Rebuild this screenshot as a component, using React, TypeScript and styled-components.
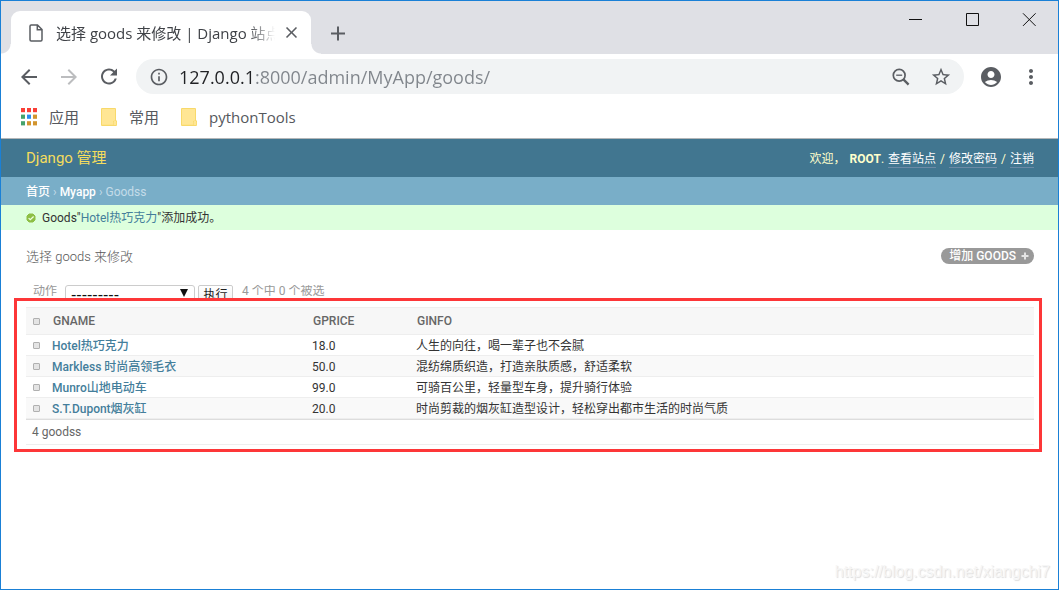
import React from "react";
import styled, { createGlobalStyle } from "styled-components";
import {
  MdAccountCircle,
  MdAdd,
  MdArrowBack,
  MdArrowForward,
  MdClose,
  MdInfoOutline,
  MdMoreVert,
  MdRefresh,
  MdStarBorder,
} from "react-icons/md";

const uiFont = `"Open Sans", "Noto Sans CJK SC", sans-serif`;
const adminFont = `Roboto, "Noto Sans CJK SC", sans-serif`;

const GlobalStyle = createGlobalStyle`
  *, *::before, *::after { box-sizing: border-box; }
  body { margin: 0; background: #fff; }
  a { color: inherit; text-decoration: none; }
  button { font: inherit; color: inherit; border: 0; background: none; padding: 0; }
`;

const Window = styled.div`
  position: relative;
  min-height: 100vh;
  border: 1px solid #1a80d6;
  background: #fff;
  font-family: ${uiFont};
`;

/* ---------- browser chrome ---------- */

const TitleBar = styled.div`
  display: flex;
  align-items: flex-start;
  height: 53px;
  padding-left: 10px;
  background: #dfe0e5;
`;

const Tab = styled.div`
  position: relative;
  display: flex;
  align-items: center;
  width: 300px;
  height: 43px;
  margin-top: 10px;
  padding: 0 10px 0 18px;
  border-radius: 9px 9px 0 0;
  background: #fff;

  &::before,
  &::after {
    content: "";
    position: absolute;
    bottom: 0;
    width: 10px;
    height: 10px;
  }
  &::before {
    left: -10px;
    background: radial-gradient(circle at 0 0, transparent 9px, #fff 10px);
  }
  &::after {
    right: -10px;
    background: radial-gradient(circle at 100% 0, transparent 9px, #fff 10px);
  }
`;

const TabTitle = styled.span`
  flex: 1;
  margin: 0 6px 0 13px;
  overflow: hidden;
  white-space: nowrap;
  font-size: 15px;
  line-height: 24px;
  color: #3f4247;
  mask-image: linear-gradient(to right, #000 88%, transparent 100%);
`;

const IconButton = styled.button<{ $size?: number; $color?: string }>`
  display: flex;
  flex: none;
  align-items: center;
  justify-content: center;
  width: ${(p) => p.$size ?? 24}px;
  height: ${(p) => p.$size ?? 24}px;
  color: ${(p) => p.$color ?? "#5a5d62"};
`;

const NewTab = styled(IconButton)`
  margin: 20px 0 0 15px;
`;

const WindowControls = styled.div`
  display: flex;
  gap: 33px;
  margin: 7px 17px 0 auto;
`;

const Toolbar = styled.div`
  display: flex;
  align-items: center;
  height: 45px;
  padding: 0 15px 0 16px;
  gap: 16px;
`;

const AddressBar = styled.div`
  display: flex;
  flex: 1;
  align-items: center;
  height: 35px;
  margin: 0 -1px 0 -1px;
  padding: 0 11px 0 13px;
  border-radius: 18px;
  background: #f1f3f4;
  color: #5a5d62;
`;

const UrlInput = styled.input`
  flex: 1;
  min-width: 0;
  margin: 0 10px;
  padding: 0;
  border: 0;
  outline: 0;
  font-family: ${uiFont};
  font-size: 18px;
  line-height: 26px;
  background: linear-gradient(to right, #202124 76px, #80858b 76px);
  background-clip: text;
  -webkit-text-fill-color: transparent;
`;

const AddressActions = styled.div`
  display: flex;
  gap: 16px;
`;

const Bookmarks = styled.nav`
  display: flex;
  align-items: center;
  height: 40px;
  padding: 0 19px 3px;
  gap: 22px;
  border-bottom: 1px solid #b3b6b8;
  font-size: 15px;
  line-height: 22px;
  color: #55585d;
`;

const Bookmark = styled.a`
  display: flex;
  align-items: center;
  gap: 12px;
`;

/* ---------- Django admin ---------- */

const Admin = styled.div`
  font-family: ${adminFont};
  font-size: 12px;
  line-height: 16px;
  color: #333;
`;

const AdminHeader = styled.header`
  display: flex;
  align-items: center;
  justify-content: space-between;
  height: 38px;
  padding: 0 24px 0 25px;
  background: #417690;
  color: #ffc;
`;

const Branding = styled.a`
  font-size: 15px;
  line-height: 20px;
  color: #f5dd5d;
`;

const UserTools = styled.div`
  display: flex;
  align-items: baseline;
  gap: 4px;
  padding-top: 2px;
`;

const UserLink = styled.a`
  color: #fff;
  border-bottom: 1px solid #6b8aa6;
  line-height: 15px;
`;

const Breadcrumbs = styled.nav`
  display: flex;
  align-items: center;
  gap: 3px;
  height: 28px;
  padding: 1px 25px 0;
  background: #79aec8;
  color: #c4dce8;

  a {
    color: #fff;
    font-weight: 500;
  }
`;

const Message = styled.p`
  display: flex;
  align-items: center;
  gap: 6px;
  height: 25px;
  margin: 0;
  padding: 0 25px;
  background: #dfd;

  a {
    color: #447e9b;
  }
`;

const Main = styled.main`
  padding: 18px 16px 24px 13px;
`;

const TitleRow = styled.div`
  display: flex;
  align-items: center;
  justify-content: space-between;
  height: 16px;
  margin: 0 8px 21px 12px;
`;

const PageTitle = styled.h1`
  margin: 0;
  padding-top: 2px;
  font-size: 13px;
  font-weight: 300;
  color: #555;
`;

const AddLink = styled.a`
  display: flex;
  align-items: center;
  gap: 5px;
  height: 16px;
  padding: 0 5px 0 8px;
  border-radius: 8px;
  background: #999;
  color: #fff;
  font-weight: 500;
`;

const Actions = styled.form`
  display: flex;
  align-items: flex-start;
  height: 13px;
  padding-left: 19px;
  overflow: hidden;
  line-height: 13px;
  color: #999;
`;

const ActionLabel = styled.label`
  display: flex;
  gap: 8px;
`;

const SelectBox = styled.span`
  position: relative;
  display: block;
  width: 130px;

  svg {
    position: absolute;
    top: 4px;
    right: 7px;
  }
`;

const Select = styled.select`
  display: block;
  width: 100%;
  height: 20px;
  padding: 0 5px;
  appearance: none;
  border: 1px solid #ccc;
  border-radius: 3px;
  background: #fff;
  color: #111;
  font: 16px/18px "Liberation Sans", sans-serif;
`;

const RunButton = styled.button`
  width: 35px;
  height: 20px;
  margin: 0 9px 0 3px;
  border: 1px solid #ccc;
  border-radius: 2px;
  background: linear-gradient(#fff, #eee);
  color: #222;
`;

const Results = styled.section`
  padding: 6px 5px 4px 9px;
  border: 3px solid #fd3638;
  background: #fff;
`;

const Table = styled.table`
  width: 100%;
  table-layout: fixed;
  border-collapse: collapse;
  text-align: left;
`;

const HeadCell = styled.th<{ $width?: number }>`
  width: ${(p) => (p.$width ? `${p.$width}px` : "auto")};
  height: 27px;
  padding: 0 0 0 9px;
  border-top: 1px solid #eee;
  border-bottom: 1px solid #eee;
  background: #f7f7f7;
  color: #666;
  font-weight: 500;
`;

const Row = styled.tr`
  height: 21px;
  border-bottom: 1px solid #eee;

  &:nth-child(even) {
    background: #f9f9f9;
  }
`;

const Cell = styled.td`
  padding: 1px 0 0 8px;
`;

const NameCell = styled.th`
  padding: 1px 0 0 8px;
  color: #447e9b;
  font-weight: 500;
`;

const Check = styled.input`
  display: block;
  width: 7px;
  height: 7px;
  margin: 0;
  appearance: none;
  border: 1px solid #b0b0b0;
  border-radius: 1px;
  background: #e4e4e4;
`;

const HeadCheckCell = styled(HeadCell)`
  padding-left: 7px;
`;

const CheckCell = styled(Cell)`
  padding: 0 0 0 7px;
`;

const Count = styled.p`
  height: 26px;
  margin: 0;
  padding: 0 6px;
  border-top: 1px solid #ddd;
  border-bottom: 1px solid #eee;
  line-height: 24px;
  color: #666;
`;

const Watermark = styled.span`
  position: absolute;
  right: 8px;
  bottom: 7px;
  font: 16px/20px "Liberation Sans", sans-serif;
  color: #f6f6f6;
  text-shadow: 1px 1px 1px #ddd;
`;

const PageIcon = () => (
  <svg width="14" height="18" viewBox="0 0 14 18" fill="none" stroke="#5a5d62" strokeWidth="1.5">
    <path d="M1 2.2Q1 1 2.2 1H8.5L13 5.6V15.8Q13 17 11.8 17H2.2Q1 17 1 15.8ZM8.3 1.2V5.8H12.8" />
  </svg>
);

const ZoomOutIcon = () => (
  <svg width="18" height="18" viewBox="0 0 18 18" fill="none" stroke="currentColor">
    <circle cx="7.2" cy="7.2" r="5.9" strokeWidth="1.7" />
    <path d="M11.4 11.4L16.6 16.6" strokeWidth="2.3" />
    <path d="M4.2 7.2H10.2" strokeWidth="1.3" />
  </svg>
);

const gridColors = [
  "#f93e36", "#f93e36", "#f93e36",
  "#45a36c", "#2a8cf0", "#d2952f",
  "#45a36c", "#d2952f", "#d2952f",
];

const AppsIcon = () => (
  <svg width="17" height="18" viewBox="0 0 17 18">
    {gridColors.map((c, i) => (
      <rect key={i} x={1 + (i % 3) * 6} y={Math.floor(i / 3) * 6.6} width="4" height="4.2" fill={c} />
    ))}
  </svg>
);

const FolderIcon = () => (
  <svg width="16" height="18" viewBox="0 0 16 18">
    <path d="M0 1Q0 0 1 0H14Q15 0 15 1V12L16 13V17Q16 18 15 18H1Q0 18 0 17Z" fill="#f8d96a" />
    <path d="M1 1H14V12.4L12 13V16.8H1Z" fill="#ffe694" />
    <path d="M12.6 17V14.2Q12.6 12.8 14 12.8T15.2 14.2V17Z" fill="#ffe694" />
  </svg>
);

const SuccessIcon = () => (
  <svg width="10" height="10" viewBox="0 0 10 10">
    <path d="M3 1H7L9 3V7L7 9H3L1 7V3Z" fill="#8dbf45" stroke="#8dbf45" strokeLinejoin="round" />
    <path d="M2.6 5.1L4.3 6.7L7.6 3.5" fill="none" stroke="#efffe0" strokeWidth="1.3" />
  </svg>
);

const PlusIcon = () => (
  <svg width="8" height="8" viewBox="0 0 8 8" stroke="#e4e4e4" strokeWidth="2">
    <path d="M4 .5V7.5M.5 4H7.5" />
  </svg>
);

const ControlIcon = ({ d }: { d: string }) => (
  <svg width="14" height="14" viewBox="0 0 14 14" fill="none" stroke="#111" strokeWidth="1">
    <path d={d} />
  </svg>
);

const goods = [
  { name: "Hotel热巧克力", price: "18.0", info: "人生的向往，喝一辈子也不会腻" },
  { name: "Markless 时尚高领毛衣", price: "50.0", info: "混纺绵质织造，打造亲肤质感，舒适柔软" },
  { name: "Munro山地电动车", price: "99.0", info: "可骑百公里，轻量型车身，提升骑行体验" },
  { name: "S.T.Dupont烟灰缸", price: "20.0", info: "时尚剪裁的烟灰缸造型设计，轻松穿出都市生活的时尚气质" },
];

export default function App() {
  return (
    <Window lang="zh-CN">
      <GlobalStyle />
      <TitleBar>
        <Tab>
          <PageIcon />
          <TabTitle>选择 goods 来修改 | Django 站点</TabTitle>
          <IconButton $size={20} aria-label="关闭标签页">
            <MdClose size={19} />
          </IconButton>
        </Tab>
        <NewTab aria-label="新标签页">
          <MdAdd size={25} />
        </NewTab>
        <WindowControls>
          <IconButton aria-label="最小化"><ControlIcon d="M1 6.5H14" /></IconButton>
          <IconButton aria-label="最大化"><ControlIcon d="M1.5 .5H13.5V12.5H1.5Z" /></IconButton>
          <IconButton aria-label="关闭"><ControlIcon d="M1 .3L13.6 12.9M13.6 .3L1 12.9" /></IconButton>
        </WindowControls>
      </TitleBar>

      <Toolbar>
        <IconButton aria-label="后退"><MdArrowBack size={24} /></IconButton>
        <IconButton aria-label="前进" $color="#bcbdbf"><MdArrowForward size={24} /></IconButton>
        <IconButton aria-label="重新加载"><MdRefresh size={25} /></IconButton>
        <AddressBar>
          <MdInfoOutline size={20} />
          <UrlInput aria-label="地址" defaultValue="127.0.0.1:8000/admin/MyApp/goods/" />
          <AddressActions>
            <IconButton aria-label="缩放"><ZoomOutIcon /></IconButton>
            <IconButton aria-label="收藏"><MdStarBorder size={22} /></IconButton>
          </AddressActions>
        </AddressBar>
        <IconButton aria-label="用户"><MdAccountCircle size={26} /></IconButton>
        <IconButton aria-label="菜单"><MdMoreVert size={24} /></IconButton>
      </Toolbar>

      <Bookmarks>
        <Bookmark href="#apps"><AppsIcon />应用</Bookmark>
        <Bookmark href="#common"><FolderIcon />常用</Bookmark>
        <Bookmark href="#tools"><FolderIcon />pythonTools</Bookmark>
      </Bookmarks>

      <Admin>
        <AdminHeader>
          <Branding href="#admin">Django 管理</Branding>
          <UserTools>
            <span>欢迎，</span>
            <span><strong>ROOT</strong>.</span>
            <UserLink href="#site">查看站点</UserLink>
            <span>/</span>
            <UserLink href="#password">修改密码</UserLink>
            <span>/</span>
            <UserLink href="#logout">注销</UserLink>
          </UserTools>
        </AdminHeader>
        <Breadcrumbs>
          <a href="#home">首页</a>
          <span>›</span>
          <a href="#myapp">Myapp</a>
          <span>›</span>
          <span>Goodss</span>
        </Breadcrumbs>
        <Message>
          <SuccessIcon />
          <span>Goods"<a href="#hotel">Hotel热巧克力</a>"添加成功。</span>
        </Message>

        <Main>
          <TitleRow>
            <PageTitle>选择 goods 来修改</PageTitle>
            <AddLink href="#add">增加 GOODS <PlusIcon /></AddLink>
          </TitleRow>
          <Actions>
            <ActionLabel>
              动作
              <SelectBox>
                <Select defaultValue="">
                  <option value="">---------</option>
                </Select>
                <svg width="8" height="8" viewBox="0 0 8 8"><path d="M0 0H8L4 8Z" fill="#111" /></svg>
              </SelectBox>
            </ActionLabel>
            <RunButton type="button">执行</RunButton>
            <span>4 个中 0 个被选</span>
          </Actions>
          <Results>
            <Table>
              <thead>
                <tr>
                  <HeadCheckCell $width={18}><Check type="checkbox" aria-label="全选" /></HeadCheckCell>
                  <HeadCell $width={260}>GNAME</HeadCell>
                  <HeadCell $width={104}>GPRICE</HeadCell>
                  <HeadCell>GINFO</HeadCell>
                </tr>
              </thead>
              <tbody>
                {goods.map((g) => (
                  <Row key={g.name}>
                    <CheckCell><Check type="checkbox" aria-label={g.name} /></CheckCell>
                    <NameCell scope="row"><a href="#change">{g.name}</a></NameCell>
                    <Cell>{g.price}</Cell>
                    <Cell>{g.info}</Cell>
                  </Row>
                ))}
              </tbody>
            </Table>
            <Count>4 goodss</Count>
          </Results>
        </Main>
      </Admin>
      <Watermark>https://blog.csdn.net/xiangchi7</Watermark>
    </Window>
  );
}
